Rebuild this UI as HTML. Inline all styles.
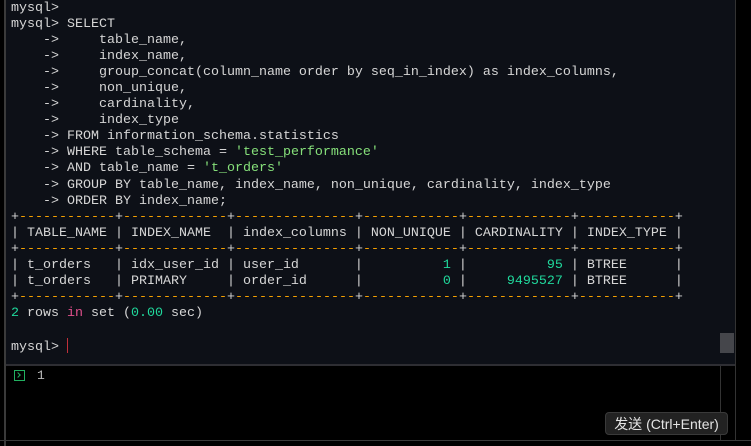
<!DOCTYPE html>
<html><head><meta charset="utf-8"><style>
html,body{margin:0;padding:0;width:751px;height:446px;overflow:hidden;background:#000;}
#term{position:absolute;left:6px;top:0;width:729px;height:364px;background:#0d1017;}
#lb{position:absolute;left:4px;top:0;width:2px;height:446px;background:#3a3a3a;}
#sep{position:absolute;left:6px;top:364px;width:729px;height:2px;background:#2e2e33;}
#rb{position:absolute;left:735px;top:0;width:1px;height:440px;background:#333;}
#thumb{position:absolute;left:720px;top:333px;width:14px;height:20px;background:#45464b;}
#bot{position:absolute;left:0;top:440px;width:751px;height:1px;background:#3a3a3a;}
#vl{position:absolute;left:720px;top:366px;width:1px;height:74px;background:#333;}
pre{position:absolute;left:11px;top:1px;margin:0;font-family:"Liberation Mono",monospace;font-size:13.33px;line-height:16.05px;color:#d6d6d6;}
.o{color:#f5a000}.g{color:#20d89c}.s{color:#86e07a}.p{color:#e0508c}
#cur{display:inline-block;width:1px;height:15px;background:#c0303a;vertical-align:-3px;}
#ic{position:absolute;left:14px;top:370px;width:9px;height:9px;border:1.5px solid #22b060;}
#ic:after{content:"";position:absolute;left:1px;top:2px;width:3px;height:3px;border-right:1.5px solid #22b060;border-top:1.5px solid #22b060;transform:rotate(45deg);}
#n1{position:absolute;left:37px;top:368px;color:#bbb;font-family:"Liberation Mono",monospace;font-size:13px;}
#btn{position:absolute;left:605px;top:412px;width:123px;height:23px;background:#222;border:1px solid #3a3a3a;border-radius:4px;color:#e4e4e4;font-family:"Liberation Sans","Noto Sans CJK SC",sans-serif;font-size:14px;line-height:23px;text-align:center;box-sizing:border-box;}
</style></head><body>
<div id="term"></div><div id="lb"></div><div id="sep"></div><div id="rb"></div><div id="thumb"></div><div id="vl"></div><div id="bot"></div>
<pre>mysql&gt;
mysql&gt; SELECT
    -&gt;     table_name,
    -&gt;     index_name,
    -&gt;     group_concat(column_name order by seq_in_index) as index_columns,
    -&gt;     non_unique,
    -&gt;     cardinality,
    -&gt;     index_type
    -&gt; FROM information_schema.statistics
    -&gt; WHERE table_schema = <span class="s">'test_performance'</span>
    -&gt; AND table_name = <span class="s">'t_orders'</span>
    -&gt; GROUP BY table_name, index_name, non_unique, cardinality, index_type
    -&gt; ORDER BY index_name;
+<span class="o">------------</span>+<span class="o">-------------</span>+<span class="o">---------------</span>+<span class="o">------------</span>+<span class="o">-------------</span>+<span class="o">------------</span>+
| TABLE_NAME | INDEX_NAME  | index_columns | NON_UNIQUE | CARDINALITY | INDEX_TYPE |
+<span class="o">------------</span>+<span class="o">-------------</span>+<span class="o">---------------</span>+<span class="o">------------</span>+<span class="o">-------------</span>+<span class="o">------------</span>+
| t_orders   | idx_user_id | user_id       |          <span class="g">1</span> |          <span class="g">95</span> | BTREE      |
| t_orders   | PRIMARY     | order_id      |          <span class="g">0</span> |     <span class="g">9495527</span> | BTREE      |
+<span class="o">------------</span>+<span class="o">-------------</span>+<span class="o">---------------</span>+<span class="o">------------</span>+<span class="o">-------------</span>+<span class="o">------------</span>+
<span class="g">2</span> rows <span class="p">in</span> set (<span class="g">0.00</span> sec)

mysql&gt; <span id="cur"></span></pre>
<div id="ic"></div><div id="n1">1</div>
<div id="btn">发送 (Ctrl+Enter)</div>
</body></html>
